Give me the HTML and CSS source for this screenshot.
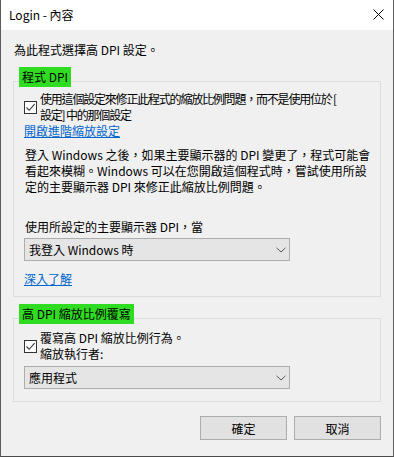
FILE: index.html
```html
<!DOCTYPE html>
<html lang="zh-Hant">
<head>
<meta charset="utf-8">
<title>Login - 內容</title>
<link rel="stylesheet" href="styles.css">
</head>
<body>
<div class="window">
  <div class="titlebar">
    <span class="title">Login - 內容</span>
    <svg class="close" width="11" height="11" viewBox="0 0 11 11"><path d="M0.5 0.5 L10.5 10.5 M10.5 0.5 L0.5 10.5" stroke="#000" stroke-width="1" fill="none"/></svg>
  </div>
  <div class="content">
    <p class="intro">為此程式選擇高 DPI 設定。</p>

    <section class="group">
      <div class="legend">程式 DPI</div>
      <div class="box box-first">
        <div class="check">
          <span class="checkbox"><svg width="11" height="11" viewBox="0 0 11 11"><path d="M1.5 5.5 L4.2 8.3 L9.6 2.2" stroke="#333" stroke-width="1.1" fill="none"/></svg></span>
          <span class="check-label narrow">使用這個設定來修正此程式的縮放比例問題，而不是使用位於 [<br>設定] 中的那個設定</span>
        </div>
        <a class="link link-adv" href="#">開啟進階縮放設定</a>
        <p class="para">登入 Windows 之後，如果主要顯示器的 DPI 變更了，程式可能會<br>看起來模糊。Windows 可以在您開啟這個程式時，嘗試使用所設<br>定的主要顯示器 DPI 來修正此縮放比例問題。</p>
        <p class="field-label">使用所設定的主要顯示器 DPI，當</p>
        <div class="select select-first">
          <span>我登入 Windows 時</span>
          <svg class="chev" width="10" height="6" viewBox="0 0 10 6"><path d="M0.5 0.8 L5 5 L9.5 0.8" stroke="#555" stroke-width="1" fill="none"/></svg>
        </div>
        <a class="link link-more" href="#">深入了解</a>
      </div>
    </section>

    <section class="group group-second">
      <div class="legend">高 DPI 縮放比例覆寫</div>
      <div class="box box-second">
        <div class="check">
          <span class="checkbox"><svg width="11" height="11" viewBox="0 0 11 11"><path d="M1.5 5.5 L4.2 8.3 L9.6 2.2" stroke="#333" stroke-width="1.1" fill="none"/></svg></span>
          <span class="check-label">覆寫高 DPI 縮放比例行為。<br>縮放執行者:</span>
        </div>
        <div class="select select-second">
          <span>應用程式</span>
          <svg class="chev" width="10" height="6" viewBox="0 0 10 6"><path d="M0.5 0.8 L5 5 L9.5 0.8" stroke="#555" stroke-width="1" fill="none"/></svg>
        </div>
      </div>
    </section>

    <div class="buttons">
      <button class="btn">確定</button>
      <button class="btn">取消</button>
    </div>
  </div>
</div>
</body>
</html>
```
FILE: styles.css
```css
* { box-sizing: border-box; }
html, body {
  margin: 0;
  padding: 0;
  width: 394px;
  height: 457px;
  overflow: hidden;
  background: #f0f0f0;
}
body {
  font-family: "Noto Sans CJK TC", "Noto Sans", sans-serif;
  font-size: 12px;
  color: #000;
}
.window {
  width: 394px;
  height: 457px;
  display: flex;
  flex-direction: column;
  border-left: 1px solid #5c5c5c;
  border-right: 1px solid #5c5c5c;
  border-bottom: 1px solid #4a4a4a;
  background: #f0f0f0;
}
.titlebar {
  height: 30px;
  flex: none;
  background: #fff;
  display: flex;
  align-items: center;
  justify-content: space-between;
  padding: 0 9px 0 8px;
}
.title {
  font-size: 12px;
  line-height: 16px;
}
.close {
  display: block;
  margin-top: -1px;
}
.content {
  flex: 1;
  padding: 12px 12px 0 12px;
  display: flex;
  flex-direction: column;
}
.intro {
  margin: 0 0 0 1px;
  line-height: 16px;
}
.group {
  margin-top: 9px;
  display: flex;
  flex-direction: column;
  align-items: flex-start;
}
.group-second {
  margin-top: 7px;
}
.legend {
  position: relative;
  z-index: 1;
  margin-left: 6px;
  background: #30dc22;
  line-height: 20px;
  height: 20px;
  padding: 0 3px;
}
.box {
  margin-top: -6px;
  width: 368px;
  border: 1px solid #dcdcdc;
  padding: 9px 10px 9px 10px;
  display: flex;
  flex-direction: column;
  align-items: flex-start;
}
.box-second {
  padding-top: 11px;
  padding-bottom: 12px;
}
.check {
  display: flex;
  align-items: center;
}
.checkbox {
  width: 13px;
  height: 13px;
  border: 1px solid #333;
  background: #fff;
  display: flex;
  align-items: center;
  justify-content: center;
  flex: none;
  margin-right: 3px;
}
.checkbox svg { display: block; }
.check-label {
  line-height: 16px;
}
.check-label.narrow {
  letter-spacing: -1.2px;
}
.link {
  color: #0066cc;
  text-decoration: underline;
  line-height: 15px;
}
.link-more {
  margin-top: 10px;
  line-height: 16px;
}
.para {
  margin: 9px 0 0 1px;
  line-height: 16px;
  white-space: nowrap;
}
.field-label {
  margin: 24px 0 0 1px;
  line-height: 16px;
}
.select {
  width: 266px;
  height: 23px;
  background: #e5e5e5;
  border: 1px solid #adadad;
  display: flex;
  align-items: center;
  justify-content: space-between;
  padding: 0 3px 0 4px;
}
.select-first { margin-top: 3px; }
.select-second { margin-top: 4px; }
.chev { display: block; }
.buttons {
  margin-top: 14px;
  display: flex;
  justify-content: flex-end;
  gap: 7px;
}
.btn {
  width: 87px;
  height: 24px;
  background: #e1e1e1;
  border: 1px solid #adadad;
  font-family: "Noto Sans CJK TC", "Noto Sans", sans-serif;
  font-size: 12px;
  color: #000;
  padding: 0;
}
```
